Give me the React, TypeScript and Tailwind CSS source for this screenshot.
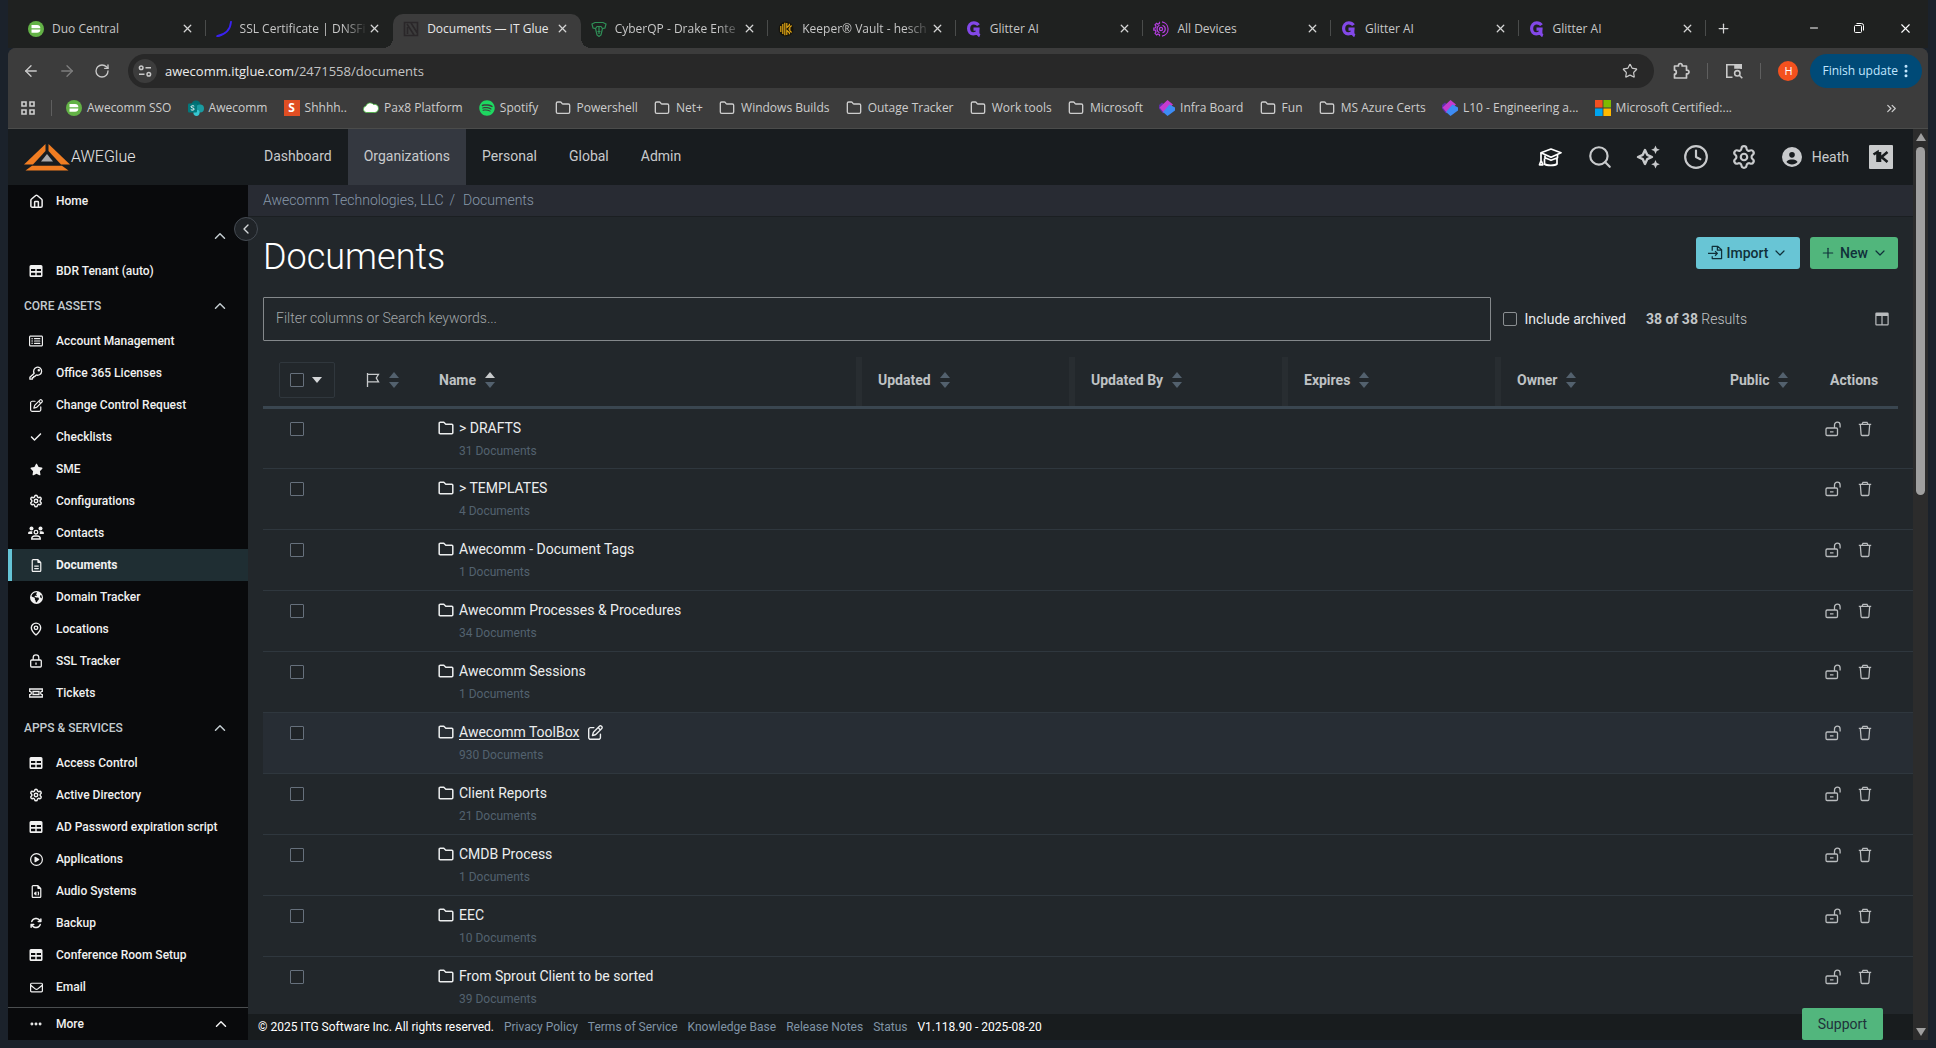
import React from 'react'
import clsx from 'clsx'
import {
  ArrowLeft,
  ArrowRight,
  ChevronDown,
  ChevronLeft,
  ChevronUp,
  ChevronsRight,
  Clock,
  Ellipsis,
  EllipsisVertical,
  Folder,
  House,
  MapPin,
  Minus,
  Plus,
  RotateCw,
  Search,
  Settings,
  Star,
  X,
} from 'lucide-react'
import {
  FaArrowsRotate,
  FaCheck,
  FaCircleUser,
  FaEarthAmericas,
  FaRegCirclePlay,
  FaRegEnvelope,
  FaRegFileAudio,
  FaRegFileLines,
  FaRegPenToSquare,
  FaRegRectangleList,
  FaSpotify,
  FaStar,
} from 'react-icons/fa6'

/* ---------- icons ---------- */

const DuoIcon = () => (
  <svg viewBox="0 0 16 16" className="size-4 shrink-0">
    <circle cx="8" cy="8" r="8" fill="#63b246" />
    <path d="M3.500 4h5.500a3.400 3.400 0 0 1 3.400 3.200H3.500z" fill="#fff" />
    <path d="M3.500 8.600h8.900A3.400 3.400 0 0 1 9 11.800H3.500z" fill="#fff" />
  </svg>
)

const DnsIcon = () => (
  <svg viewBox="0 0 16 16" className="size-4 shrink-0" fill="none" stroke="#3a22f0" strokeLinecap="round">
    <path d="M15 .8c-.6 6.700-5 12.400-13.500 14.200" strokeWidth="1.800" />
    <path d="M1 15.200c1.500-.1 3-.5 4.300-1" strokeWidth="1.400" />
  </svg>
)

const GlueIcon = () => (
  <svg viewBox="0 0 16 16" className="size-4 shrink-0" fill="none" stroke="#2a2729" strokeWidth="1.600">
    <path d="M1.500 1.500h13v13h-13zM4 3l7 11M8 2l6 9.500M4.500 6v7" />
  </svg>
)

const CyberIcon = () => (
  <svg viewBox="0 0 16 16" className="size-4 shrink-0" fill="none" stroke="#2f8f57" strokeWidth="1.200">
    <path d="M1 3l3-1.500h8L15 3l-1 4-2.500.5L10 5.500H6L4.500 7.500 2 7zM4.500 7.500L6 14l2 1.500L10 14l1.500-6.500M8 6v7M6.500 10.500h3" />
  </svg>
)

const KeeperIcon = () => (
  <svg viewBox="0 0 16 16" className="size-4 shrink-0">
    <circle cx="8" cy="8" r="7.500" fill="#17140b" />
    <g fill="none" stroke="#e0a413" strokeWidth="1.200">
      <path d="M2.800 5v6M4.800 3v10M6.800 1.800v12.400M8.800 2v4.600l2.600-2.300M8.800 14V9.400l2.600 2.300M10.200 8h1.200M11.400 2.800v1.700M11.400 13.200v-1.700M13.600 4.500L11.800 6.300v3.400l1.800 1.800" />
    </g>
  </svg>
)

const GlitterIcon = () => (
  <svg viewBox="0 0 16 16" className="size-4 shrink-0" fill="none" stroke="#8348e8" strokeWidth="3.200">
    <path d="M12.500 4.200C11.200 2.300 9.500 1.800 7.800 1.800 4.600 1.800 2.600 4.300 2.600 7.600s2 5.200 4.600 5.200c3 0 4.800-1.800 4.800-4.600H7.500M11.800 8.500v3.200c0 1.600.7 2.500 2 3" />
  </svg>
)

const DevicesIcon = () => (
  <svg viewBox="0 0 16 16" className="size-4 shrink-0" fill="none" stroke="#b43ee0" strokeWidth="1.200">
    <circle cx="8" cy="8" r="1.600" />
    <path d="M6.500.8v1.600L4.800 3.200 3.600 2.200 2 3.900l1 1.300L2.300 7H.8v2.200h1.500L3 11l-1 1.300L3.600 14l1.200-1 1.700.7v1.600M9 .8a7.300 7.300 0 0 1 0 14.400M9.500 4.200a4 4 0 0 1 0 7.600M6.500 4.300a4 4 0 0 0 0 7.400" />
  </svg>
)

const SharepointIcon = () => (
  <svg viewBox="0 0 16 16" className="size-4 shrink-0">
    <circle cx="8" cy="5" r="4.600" fill="#036c70" />
    <circle cx="12" cy="8.500" r="4" fill="#1a9ba1" />
    <circle cx="8.500" cy="12.800" r="3.100" fill="#37c6d0" />
    <rect y="3.500" width="9" height="9" rx="1" fill="#03787c" />
    <path d="M6.200 6.200c-.8-.6-3.200-.7-3.200.6 0 1.400 3.200.8 3.200 2.300 0 1.300-2.500 1.200-3.400.5" fill="none" stroke="#fff" />
  </svg>
)

const ShhIcon = () => (
  <span className="flex size-4 shrink-0 items-center justify-center bg-[#e04e23] text-xs font-bold text-white">S</span>
)

const PaxIcon = () => (
  <svg viewBox="0 0 16 16" className="size-4 shrink-0">
    <path d="M3.500 12.500a3.300 3.300 0 0 1-.6-6.500 4.500 4.500 0 0 1 7.600-1.600c2.700-.6 5 1.200 5 3.900 0 2.600-1.600 4.200-4 4.200z" fill="#fff" stroke="#43b83a" strokeWidth=".8" />
  </svg>
)

const LoopIcon = () => (
  <svg viewBox="0 0 16 16" className="size-4 shrink-0">
    <path d="M0 5l3-2.500 6 5-5 6L0 8.500z" fill="#5d2fa8" />
    <path d="M8.500 0L14 4.500 5 13 .5 7.500z" fill="#c43bd0" />
    <path d="M10.500 4.500L16 7.500v3L8.500 16 4 12z" fill="#3d8cf5" />
  </svg>
)

const WindowsIcon = () => (
  <svg viewBox="0 0 16 16" className="size-4 shrink-0">
    <path d="M0 0h7.600v7.600H0z" fill="#f25022" />
    <path d="M8.400 0H16v7.600H8.400z" fill="#7fba00" />
    <path d="M0 8.400h7.600V16H0z" fill="#00a4ef" />
    <path d="M8.400 8.400H16V16H8.400z" fill="#ffb900" />
  </svg>
)

const AppsIcon = () => (
  <svg viewBox="0 0 14 14" className="size-[14px]" fill="none" stroke="currentColor" strokeWidth="1.600">
    <path d="M1 1h4v4H1zM9 1h4v4H9zM1 9h4v4H1zM9 9h4v4H9z" />
  </svg>
)

const TuneIcon = () => (
  <svg viewBox="0 0 14 14" className="size-[14px]" fill="none" stroke="currentColor" strokeWidth="1.500">
    <circle cx="3.200" cy="3.800" r="1.800" />
    <circle cx="10.800" cy="10.200" r="1.800" />
    <path d="M7.500 3.800H13M1 10.200h5.500" />
  </svg>
)

const PuzzleIcon = () => (
  <svg viewBox="0 0 18 18" className="size-[18px]" fill="none" stroke="currentColor" strokeWidth="1.700" strokeLinejoin="round">
    <path d="M2.500 4h4a1.900 1.900 0 1 1 3.600 0h4.400v4.200a1.900 1.900 0 1 1 0 3.600V16h-12v-3.800c2.400 0 2.400-4 0-4z" />
  </svg>
)

const SideSearchIcon = () => (
  <svg viewBox="0 0 18 16" className="h-4 w-[18px]" fill="none" stroke="currentColor" strokeWidth="1.600">
    <path d="M7.500 14.200H1.800V1.800h14.400V6" />
    <path d="M10 1.800h6.200V5H10z" fill="currentColor" />
    <circle cx="12.300" cy="10.300" r="2.700" />
    <path d="M14.300 12.300l3 3" />
  </svg>
)

const RestoreIcon = () => (
  <svg viewBox="0 0 10 10" className="size-[10px]" fill="none" stroke="currentColor">
    <rect x=".5" y="2.500" width="7" height="7" rx="1" />
    <path d="M2.500.5h5a2 2 0 0 1 2 2v5" />
  </svg>
)

const Logo = () => (
  <svg viewBox="0 0 46 27" className="h-[27px] w-[46px]">
    <path d="M21.500 0v7L9 20.500H0z" fill="#f07d22" />
    <path d="M24.500 0v7L37 20.500h9z" fill="#f07d22" />
    <path d="M8 21.800h30l6.500 4.700H1.500z" fill="#f07d22" />
    <path d="M23 10l6 7.500H17z" fill="#a9a9ab" />
  </svg>
)

const GradCapIcon = () => (
  <svg viewBox="0 0 24 20" className="h-5 w-6" fill="none" stroke="#fff" strokeWidth="1.700" strokeLinejoin="round">
    <path d="M13 2l10 3.800-10 4.500-10-4.500z" />
    <path d="M7 8.500v2.300l6 2.500 6.500-2.500V8M6.500 11.500V17c2 1.800 10.500 1.800 12.500 0v-5.500M3 5.800v8l-1.500 4h3.300L3.400 14" />
  </svg>
)

const SparkleIcon = () => (
  <svg viewBox="0 0 24 24" className="size-6" fill="none" stroke="currentColor" strokeWidth="2.400" strokeLinejoin="round">
    <path d="M9 5l2.200 4.800L16 12l-4.800 2.200L9 19l-2.200-4.800L2 12l4.800-2.200z" />
    <path d="M19.500.5l1.300 3 3 1.300-3 1.300-1.300 3-1.300-3-3-1.300 3-1.300zM19.500 15l1.300 3 3 1.300-3 1.300-1.300 3-1.300-3-3-1.300 3-1.300z" fill="currentColor" stroke="none" />
  </svg>
)

const KaseyaIcon = () => (
  <svg viewBox="0 0 24 24" className="size-6">
    <rect width="24" height="24" rx="1" fill="#c9cbcc" />
    <path d="M4.500 9.500L8.500 7v10M11 7v10M18.500 7l-6 5 6 5" fill="none" stroke="#181c1e" strokeWidth="2.600" />
  </svg>
)

const TableIcon = () => (
  <svg viewBox="0 0 14 14" className="h-[14px] w-[14px]">
    <path fillRule="evenodd" d="M2 1h10a1.500 1.500 0 0 1 1.500 1.500v9A1.500 1.500 0 0 1 12 13H2A1.500 1.500 0 0 1 .5 11.500v-9A1.500 1.500 0 0 1 2 1zm0 4v2h4.300V5zm5.700 0v2H12V5zM2 8.800v2.500h4.300V8.800zm5.700 0v2.500H12V8.800z" fill="currentColor" />
  </svg>
)

const KeyIcon = () => (
  <svg viewBox="0 0 14 14" className="size-[14px]" fill="none" stroke="currentColor" strokeWidth="1.300" strokeLinejoin="round">
    <path d="M5.200 7.300A4 4 0 1 1 7.300 9L6 10.300H4.700v1.400H3.300v1.500H.9v-2z" />
    <circle cx="9.800" cy="4.200" r=".6" fill="currentColor" />
  </svg>
)

const UsersIcon = () => (
  <svg viewBox="0 0 16 14" className="h-[14px] w-4">
    <g fill="currentColor">
      <circle cx="3.500" cy="2.600" r="2" />
      <circle cx="12.500" cy="2.600" r="2" />
      <path d="M0 7.500C0 6 1 5.200 2.500 5.200h2C4 6 4 7 4.500 8H.5zM16 7.500c0-1.500-1-2.300-2.500-2.300h-2c.5.800.5 1.800 0 2.800h4z" />
    </g>
    <g fill="none" stroke="currentColor" strokeWidth="1.300">
      <circle cx="8" cy="6.200" r="1.800" />
      <path d="M3.700 13c0-2 1-3 3-3h2.600c2 0 3 1 3 3z" />
    </g>
  </svg>
)

const LockIcon = () => (
  <svg viewBox="0 0 14 14" className="size-[14px]" fill="none" stroke="currentColor" strokeWidth="1.300">
    <rect x="1.700" y="6" width="10.600" height="7" rx="1" />
    <path d="M4.200 6V3.600a2.800 2.800 0 0 1 5.600 0V6M7 8.500v2.200" />
  </svg>
)

const TicketIcon = () => (
  <svg viewBox="0 0 14 14" className="size-[14px]" fill="none" stroke="currentColor" strokeWidth="1.300">
    <path d="M.7 3h12.600v2.300a1.700 1.700 0 0 0 0 3.400V11H.7V8.700a1.700 1.700 0 0 0 0-3.400zM4 5.500h6v3H4z" />
  </svg>
)

const ImportIcon = () => (
  <svg viewBox="0 0 16 16" className="size-[15px]" fill="none" stroke="currentColor" strokeWidth="1.300" strokeLinejoin="round">
    <path d="M4.500 6V1.500h6L14.500 5v9.500h-10V12M10 1.500V5.500h4.500M0 9h10M7.500 6.500L10 9l-2.500 2.500" />
  </svg>
)

const ColumnsIcon = () => (
  <svg viewBox="0 0 14 14" className="size-[14px]">
    <path fillRule="evenodd" d="M1.500.5h11a1.200 1.200 0 0 1 1.200 1.200v10.600a1.200 1.200 0 0 1-1.200 1.200h-11A1.200 1.200 0 0 1 .3 12.300V1.700A1.200 1.200 0 0 1 1.500.5zm0 3.500v8.300h4.900V4zm6.100 0v8.300h4.900V4z" fill="currentColor" />
  </svg>
)

const UnlockIcon = () => (
  <svg viewBox="0 0 16 16" className="size-4" fill="none" stroke="currentColor" strokeWidth="1.300">
    <rect x="1" y="7" width="11.500" height="7.500" rx="1.200" />
    <path d="M9.500 7V4a2.800 2.800 0 0 1 5.600 0v2.500M5 10.800h3.500" />
  </svg>
)

const TrashIcon = () => (
  <svg viewBox="0 0 14 16" className="h-4 w-[14px]" fill="none" stroke="currentColor" strokeWidth="1.300">
    <path d="M.8 3.300h12.400M4 3.300l1-2h4l1 2M2.300 3.300l.8 10.200c.1.700.5 1 1 1h5.800c.5 0 .9-.3 1-1l.8-10.200" />
  </svg>
)

const FlagIcon = () => (
  <svg viewBox="0 0 14 14" className="size-[14px]" fill="none" stroke="#c8cacc" strokeWidth="1.300">
    <path d="M1.500 0v14M1.500 1.300h11L10.300 5l2.200 3.800h-11" />
  </svg>
)

const FolderIcon = () => (
  <svg viewBox="0 0 16 14" className="h-[14px] w-4" fill="none" stroke="currentColor" strokeWidth="1.500" strokeLinejoin="round">
    <path d="M1.200 2.200c0-.6.400-1 1-1h3.600l2 2h6c.6 0 1 .4 1 1v7.600c0 .6-.4 1-1 1H2.200c-.6 0-1-.4-1-1z" />
  </svg>
)

const SortIcon = ({ asc }: { asc?: boolean }) => (
  <svg viewBox="0 0 10 16" className="h-4 w-[10px]">
    <path d="M5 0l5 6H0z" fill={asc ? '#c8cacc' : '#53616e'} />
    <path d="M5 16l5-6H0z" fill="#53616e" />
  </svg>
)

/* ---------- data ---------- */

// faded titles run under the close button
const tabs = [
  { title: 'Duo Central', icon: <DuoIcon />, divider: true },
  { title: 'SSL Certificate | DNSFi', icon: <DnsIcon />, faded: true },
  { title: 'Documents — IT Glue', icon: <GlueIcon />, active: true },
  { title: 'CyberQP - Drake Ente', icon: <CyberIcon />, faded: true, divider: true },
  { title: 'Keeper® Vault - hesch', icon: <KeeperIcon />, faded: true, divider: true },
  { title: 'Glitter AI', icon: <GlitterIcon />, divider: true },
  { title: 'All Devices', icon: <DevicesIcon />, divider: true },
  { title: 'Glitter AI', icon: <GlitterIcon />, divider: true },
  { title: 'Glitter AI', icon: <GlitterIcon />, divider: true },
]

const bookmarks = [
  { title: 'Awecomm SSO', icon: <DuoIcon /> },
  { title: 'Awecomm', icon: <SharepointIcon /> },
  { title: 'Shhhh..', icon: <ShhIcon /> },
  { title: 'Pax8 Platform', icon: <PaxIcon /> },
  { title: 'Spotify', icon: <FaSpotify className="size-4 shrink-0 text-[#1ed760]" /> },
  { title: 'Powershell' },
  { title: 'Net+' },
  { title: 'Windows Builds' },
  { title: 'Outage Tracker' },
  { title: 'Work tools' },
  { title: 'Microsoft' },
  { title: 'Infra Board', icon: <LoopIcon /> },
  { title: 'Fun' },
  { title: 'MS Azure Certs' },
  { title: 'L10 - Engineering a...', icon: <LoopIcon /> },
  { title: 'Microsoft Certified:...', icon: <WindowsIcon /> },
]

const navLinks = ['Dashboard', 'Organizations', 'Personal', 'Global', 'Admin']

const gear = <Settings size={14} strokeWidth={2.500} />

const coreAssets = [
  { title: 'Account Management', icon: <FaRegRectangleList size={14} /> },
  { title: 'Office 365 Licenses', icon: <KeyIcon /> },
  { title: 'Change Control Request', icon: <FaRegPenToSquare size={13} /> },
  { title: 'Checklists', icon: <FaCheck size={12} /> },
  { title: 'SME', icon: <FaStar size={13} /> },
  { title: 'Configurations', icon: gear },
  { title: 'Contacts', icon: <UsersIcon /> },
  { title: 'Documents', icon: <FaRegFileLines size={13} />, active: true },
  { title: 'Domain Tracker', icon: <FaEarthAmericas size={13} /> },
  { title: 'Locations', icon: <MapPin size={14} strokeWidth={2.400} /> },
  { title: 'SSL Tracker', icon: <LockIcon /> },
  { title: 'Tickets', icon: <TicketIcon /> },
]

const appsServices = [
  { title: 'Access Control', icon: <TableIcon /> },
  { title: 'Active Directory', icon: gear },
  { title: 'AD Password expiration script', icon: <TableIcon /> },
  { title: 'Applications', icon: <FaRegCirclePlay size={13} /> },
  { title: 'Audio Systems', icon: <FaRegFileAudio size={13} /> },
  { title: 'Backup', icon: <FaArrowsRotate size={12} /> },
  { title: 'Conference Room Setup', icon: <TableIcon /> },
  { title: 'Email', icon: <FaRegEnvelope size={13} /> },
]

const folders = [
  { name: '> DRAFTS', count: 31 },
  { name: '> TEMPLATES', count: 4 },
  { name: 'Awecomm - Document Tags', count: 1 },
  { name: 'Awecomm Processes & Procedures', count: 34 },
  { name: 'Awecomm Sessions', count: 1 },
  { name: 'Awecomm ToolBox', count: 930, hovered: true },
  { name: 'Client Reports', count: 21 },
  { name: 'CMDB Process', count: 1 },
  { name: 'EEC', count: 10 },
  { name: 'From Sprout Client to be sorted', count: 39 },
]

const footerLinks = ['Privacy Policy', 'Terms of Service', 'Knowledge Base', 'Release Notes', 'Status']

/* ---------- browser chrome ---------- */

const TabStrip = () => (
  <div className="flex h-12 items-end bg-[#1f2120] pl-[10px]">
    <div className="flex min-w-0 flex-1">
      {tabs.map(({ title, icon, active, faded, divider }, i) => (
        <div
          key={i}
          className={clsx(
            'relative flex h-[34px] min-w-0 flex-1 items-center pr-3 pb-[6px] pl-[10px] pt-px',
            active && 'rounded-t-[10px] bg-[#3c3c3c]'
          )}
        >
          {active && (
            <>
              <span className="absolute bottom-0 -left-[10px] size-[10px] bg-[radial-gradient(circle_at_0_0,transparent_10px,#3c3c3c_10px)]" />
              <span className="absolute -right-[10px] bottom-0 size-[10px] bg-[radial-gradient(circle_at_100%_0,transparent_10px,#3c3c3c_10px)]" />
            </>
          )}
          {icon}
          <span
            className={clsx(
              'ml-2 flex-1 text-xs leading-4 whitespace-nowrap',
              active ? 'text-[#e8e8e8]' : 'text-[#c7c7c7]',
              faded && '[mask-image:linear-gradient(to_right,#000_80%,transparent)]'
            )}
          >
            {title}
          </span>
          <button aria-label="Close tab" className="text-[#d5d5d5]">
            <X size={13} strokeWidth={2.400} />
          </button>
          {divider && <span className="absolute right-0 top-[6px] h-4 w-px bg-[#4a4c4b]" />}
        </div>
      ))}
    </div>
    <div className="flex h-[34px] w-[222px] items-center justify-between pr-[15px] pb-[6px] pl-[10px] text-white">
      <button aria-label="New tab" className="text-[#d5d5d5]">
        <Plus size={15} strokeWidth={2} />
      </button>
      <div className="flex items-center gap-[34px]">
        <button aria-label="Minimize"><Minus size={12} strokeWidth={2} /></button>
        <button aria-label="Restore"><RestoreIcon /></button>
        <button aria-label="Close window"><X size={15} strokeWidth={1.800} /></button>
      </div>
    </div>
  </div>
)

const Toolbar = () => (
  <div className="flex h-[46px] items-center bg-[#3c3c3c] pr-[6px] pl-[14px] text-[#c9c9c9]">
    <div className="flex gap-[18px] pr-[18px]">
      <button aria-label="Back"><ArrowLeft size={18} strokeWidth={1.800} /></button>
      <button aria-label="Forward" className="text-[#7d7d7d]"><ArrowRight size={18} strokeWidth={1.800} /></button>
      <button aria-label="Reload"><RotateCw size={16} strokeWidth={2} /></button>
    </div>
    <div className="flex h-[34px] flex-1 items-center rounded-full bg-[#282828] pr-4 pl-[5px]">
      <button aria-label="Site information" className="flex size-6 items-center justify-center rounded-full bg-[#3c3c3c]">
        <TuneIcon />
      </button>
      <a href="#" className="ml-2 flex-1 text-[13px] leading-5 text-[#c4c4c4]">
        <span className="text-[#ececec]">awecomm.itglue.com</span>/2471558/documents
      </a>
      <button aria-label="Bookmark"><Star size={16} strokeWidth={1.800} /></button>
    </div>
    <div className="flex items-center gap-[17px] pr-3 pl-[18px]">
      <button aria-label="Extensions"><PuzzleIcon /></button>
      <span className="h-4 w-px bg-[#5f5f5f]" />
      <button aria-label="Search side panel"><SideSearchIcon /></button>
      <span className="h-4 w-px bg-[#5f5f5f]" />
      <button aria-label="Profile" className="flex size-5 items-center justify-center rounded-full bg-[#f4511e] text-[11px] text-white">H</button>
    </div>
    <button className="flex h-[34px] items-center rounded-full bg-[#004a77] pr-2 pl-3 text-xs text-[#c2e7ff]">
      Finish update <EllipsisVertical size={16} strokeWidth={2.500} />
    </button>
  </div>
)

const Bookmarks = () => (
  <div className="flex h-[35px] items-center border-b border-[#4b4c4b] bg-[#3c3c3c] pr-[29px] pb-[6px] pl-[13px] text-[#cdcdcd]">
    <button aria-label="Apps"><AppsIcon /></button>
    <span className="mr-[14px] ml-4 h-4 w-px bg-[#5f5f5f]" />
    <div className="flex flex-1 justify-between">
      {bookmarks.map(({ title, icon }) => (
        <a key={title} href="#" className={clsx('flex items-center text-xs leading-4 whitespace-nowrap', icon ? 'gap-[5px]' : 'gap-[6px]')}>
          {icon ?? <Folder size={16} strokeWidth={2} className="shrink-0" />}
          {title}
        </a>
      ))}
    </div>
    <button aria-label="More bookmarks" className="ml-[152px]"><ChevronsRight size={15} /></button>
  </div>
)

/* ---------- application ---------- */

const TopNav = () => (
  <header className="flex h-14 shrink-0 items-center bg-[#181c1f] pr-5 text-[#c8cacc]">
    <a href="#" className="flex w-60 items-center gap-px pl-4">
      <Logo />
      <span className="text-base font-light text-[#e6e6e6]">AWEGlue</span>
    </a>
    <nav className="flex flex-1 self-stretch text-sm">
      {navLinks.map((link) => (
        <a key={link} href="#" className={clsx('flex items-center px-4 pb-[2px]', link === 'Organizations' && 'bg-[#343840]')}>
          {link}
        </a>
      ))}
    </nav>
    <div className="flex items-center gap-6">
      <button aria-label="Learning" className="mr-[2px]"><GradCapIcon /></button>
      <button aria-label="Search"><Search size={26} strokeWidth={2} className="-mx-px" /></button>
      <button aria-label="Assistant"><SparkleIcon /></button>
      <button aria-label="Recent"><Clock size={26} strokeWidth={2} className="-mx-px" /></button>
      <button aria-label="Settings"><Settings size={26} strokeWidth={2} className="-mx-px" /></button>
      <button className="flex items-center gap-[10px] pl-[2px] text-sm">
        <FaCircleUser size={20} /> Heath
      </button>
      <button aria-label="Kaseya" className="-ml-1"><KaseyaIcon /></button>
    </div>
  </header>
)

type Item = { title: string; icon: React.ReactNode; active?: boolean }

const SideItem = ({ title, icon, active }: Item) => (
  <a
    href="#"
    className={clsx(
      'flex h-8 items-center gap-3 border-l-4 pl-4 text-xs text-[#f1f1f1]',
      active ? 'border-[#65c4d6] bg-[#1f2e33] font-bold' : 'border-transparent'
    )}
  >
    <span className="flex w-4 justify-center">{icon}</span>
    {title}
  </a>
)

const SideHeading = ({ title }: { title?: string }) => (
  <button aria-label={title ?? 'Toggle group'} className="flex h-[38px] w-full items-center justify-between pr-[19px] pl-4 text-xs text-[#c3ccd0]">
    <span>{title}</span>
    <ChevronUp size={18} strokeWidth={2} />
  </button>
)

const Sidebar = () => (
  <aside className="relative flex w-60 shrink-0 flex-col bg-[#090a0c] font-medium">
    <SideItem title="Home" icon={<House size={15} strokeWidth={2.400} />} />
    <SideHeading />
    <SideItem title="BDR Tenant (auto)" icon={<TableIcon />} />
    <SideHeading title="CORE ASSETS" />
    {coreAssets.map((item) => (
      <SideItem key={item.title} {...item} />
    ))}
    <SideHeading title="APPS & SERVICES" />
    {appsServices.map((item) => (
      <SideItem key={item.title} {...item} />
    ))}
    <div className="mt-auto border-t border-[#4b4e50]">
      <button className="flex h-8 w-full items-center gap-3 pr-[18px] pl-5 text-xs text-[#f1f1f1]">
        <span className="flex w-4 justify-center"><Ellipsis size={14} strokeWidth={3} /></span>
        More
        <ChevronUp size={18} className="ml-auto" />
      </button>
    </div>
    <button
      aria-label="Collapse sidebar"
      className="absolute top-8 -right-[10px] z-10 flex size-6 items-center justify-center rounded-full border border-[#454b53] bg-[#202428] text-[#d5d8da]"
    >
      <ChevronLeft size={16} />
    </button>
  </aside>
)

const box = 'block size-[14px] appearance-none rounded-[1px] border border-[#66707c] bg-[#202427]'

const SortHead = ({ title, divider, asc }: { title: string; divider?: boolean; asc?: boolean }) => (
  <th className="border-b-[3px] border-[#3a4650] p-0 text-left font-bold">
    <div className={clsx('flex h-[49px] items-center pb-[3px] pl-4', divider && 'border-r-[6px] border-[#282d31]')}>
      <button className="flex items-center gap-[9px]">
        {title} <SortIcon asc={asc} />
      </button>
    </div>
  </th>
)

const DocumentsTable = () => (
  <table className="w-full table-fixed border-collapse text-sm">
    <colgroup>
      <col className="w-[87px]" />
      <col className="w-[73px]" />
      <col />
      <col className="w-[213px]" />
      <col className="w-[213px]" />
      <col className="w-[213px]" />
      <col className="w-[213px]" />
      <col className="w-[100px]" />
      <col className="w-[84px]" />
      <col className="w-[15px]" />
    </colgroup>
    <thead className="text-[#bfc2c4]">
      <tr>
        <th className="border-b-[3px] border-[#3a4650] p-0 pb-[3px]">
          <div className="ml-4 flex h-9 w-14 items-center gap-2 rounded-[2px] border border-[#30373d] pl-[10px]">
            <input type="checkbox" aria-label="Select all" className={box} />
            <svg viewBox="0 0 10 6" className="h-[6px] w-[10px]"><path d="M0 0h10L5 6z" fill="#d5d7d9" /></svg>
          </div>
        </th>
        <th className="border-b-[3px] border-[#3a4650] p-0 pb-[3px]">
          <button aria-label="Sort by flag" className="flex items-center gap-[9px] pl-4">
            <FlagIcon />
            <SortIcon />
          </button>
        </th>
        <SortHead title="Name" divider asc />
        <SortHead title="Updated" divider />
        <SortHead title="Updated By" divider />
        <SortHead title="Expires" divider />
        <SortHead title="Owner" />
        <SortHead title="Public" />
        <th className="border-b-[3px] border-[#3a4650] p-0 pb-[3px] pl-4 text-left font-bold">Actions</th>
        <td />
      </tr>
    </thead>
    <tbody>
      {folders.map(({ name, count, hovered }) => (
        <tr key={name} className={clsx('h-[61px] border-b border-[#2f373e] align-top', hovered && 'bg-[#272d34]')}>
          <td className="pt-[13px] pl-[27px]">
            <input type="checkbox" aria-label={name} className={box} />
          </td>
          <td />
          <td className="pt-[9px] pl-[15px]">
            <div className="flex items-center gap-[5px] leading-5 text-[#eceeef]">
              <FolderIcon />
              <a href="#" className={clsx(hovered && 'underline underline-offset-2')}>{name}</a>
              {hovered && <FaRegPenToSquare size={15} className="ml-1" />}
            </div>
            <div className="mt-[5px] pl-[21px] text-xs leading-4 text-[#53626f]">{count} Documents</div>
          </td>
          <td colSpan={5} />
          <td className="pt-3 pl-[11px] text-[#b9bcbe]">
            <div className="flex items-center gap-[17px]">
              <button aria-label="Security"><UnlockIcon /></button>
              <button aria-label="Delete"><TrashIcon /></button>
            </div>
          </td>
          <td />
        </tr>
      ))}
    </tbody>
  </table>
)

const Footer = () => (
  <footer className="relative flex h-[26px] shrink-0 items-center gap-[10px] bg-[#181c1e] pl-[10px] text-xs text-[#8094a6]">
    <span className="text-white">© 2025 ITG Software Inc. All rights reserved.</span>
    {footerLinks.map((link) => (
      <a key={link} href="#">{link}</a>
    ))}
    <span className="text-white">V1.118.90 - 2025-08-20</span>
    <button className="absolute right-[30px] bottom-0 h-8 w-[81px] rounded-[2px] bg-[#52b67d] text-sm text-[#20323a]">Support</button>
  </footer>
)

const Documents = () => (
  <main className="flex min-w-0 flex-1 flex-col bg-[#22272b]">
    <div className="flex h-8 shrink-0 items-center border-b border-[#1b1f22] bg-[#282b33] pb-px pl-[15px] text-sm font-light text-[#8798aa]">
      <a href="#">Awecomm Technologies, LLC</a>
      <span className="mr-2 ml-[6px]">/</span>
      <a href="#">Documents</a>
    </div>
    <div className="flex min-h-0 flex-1 flex-col overflow-hidden pl-[15px]">
      <div className="flex items-center pt-[14px] pr-[15px]">
        <h1 className="flex-1 text-4xl leading-[52px] font-light text-white">Documents</h1>
        <div className="flex gap-[10px] pb-2 text-sm text-[#10303a]">
          <button className="flex h-8 w-[104px] items-center justify-center gap-1 rounded-[3px] bg-[#68c5d5] pb-px font-medium">
            <ImportIcon /> Import <ChevronDown size={16} strokeWidth={1.800} />
          </button>
          <button className="flex h-8 w-[88px] items-center justify-center gap-1 rounded-[3px] bg-[#51b67c] pb-px font-medium">
            <Plus size={16} strokeWidth={1.800} /> New <ChevronDown size={16} strokeWidth={1.800} />
          </button>
        </div>
      </div>
      <div className="mt-[14px] flex items-center pr-[24px]">
        <input
          type="text"
          aria-label="Filter columns"
          placeholder="Filter columns or Search keywords..."
          className="h-11 flex-1 rounded-[1px] border border-[#84888b] bg-transparent px-3 pb-[2px] text-sm font-light text-white placeholder:text-[#a3a7aa]"
        />
        <label className="ml-3 flex items-center gap-[7px] text-sm text-[#e8eaeb]">
          <input type="checkbox" className="block size-[14px] appearance-none rounded-[2px] border border-[#8b8f92]" />
          Include archived
        </label>
        <span className="ml-5 text-sm font-light text-[#c3c6c8]">
          <b className="font-bold">38 of 38</b> Results
        </span>
        <button aria-label="Columns" className="ml-[128px] text-[#b9bcbe]"><ColumnsIcon /></button>
      </div>
      <div className="mt-4 min-h-0 flex-1 overflow-hidden">
        <DocumentsTable />
      </div>
    </div>
    <Footer />
  </main>
)

const ScrollBar = () => (
  <div className="flex w-[15px] shrink-0 flex-col items-center bg-[#2c2c2c] py-1">
    <svg viewBox="0 0 10 8" className="h-2 w-[10px]"><path d="M5 0l5 8H0z" fill="#9f9f9f" /></svg>
    <div className="mt-[6px] h-[38.5%] w-[9px] rounded-full bg-[#9f9f9f]" />
    <svg viewBox="0 0 10 8" className="mt-auto h-2 w-[10px]"><path d="M5 8l5-8H0z" fill="#9f9f9f" /></svg>
  </div>
)

export default function App() {
  return (
    <div className="flex h-screen flex-col bg-[#1b222b] px-2 pb-2">
      <div className="shrink-0 font-['Open_Sans','Noto_Sans',sans-serif]">
        <TabStrip />
        <div className="overflow-hidden rounded-t-[8px] bg-[#3c3c3c]">
          <Toolbar />
          <Bookmarks />
        </div>
      </div>
      <div className="flex min-h-0 flex-1 font-['Roboto',sans-serif]">
        <div className="flex min-w-0 flex-1 flex-col">
          <TopNav />
          <div className="flex min-h-0 flex-1">
            <Sidebar />
            <Documents />
          </div>
        </div>
        <ScrollBar />
      </div>
    </div>
  )
}
